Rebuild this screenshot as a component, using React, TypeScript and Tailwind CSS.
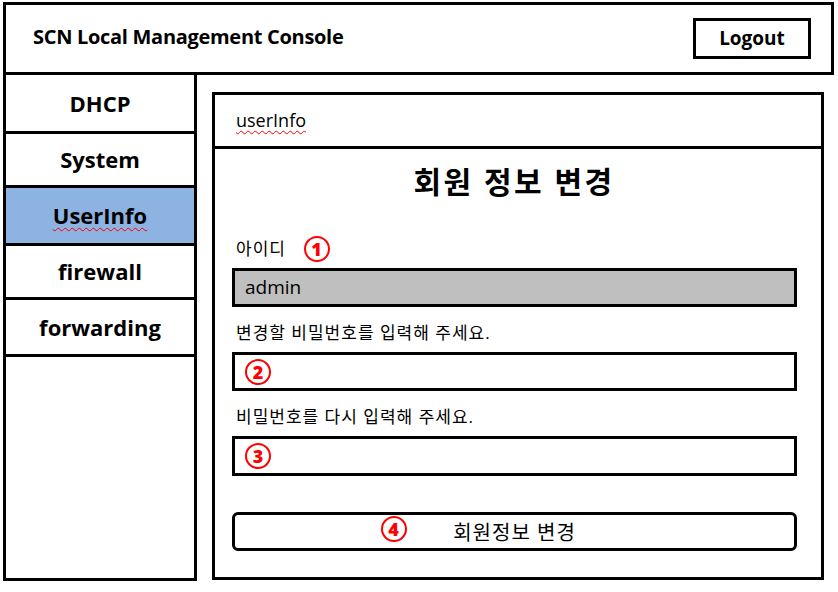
import React from "react";

const menu = [
  { label: "DHCP", h: "h-[59px]" },
  { label: "System", h: "h-[54px]" },
  { label: "UserInfo", h: "h-[58px]", active: true },
  { label: "firewall", h: "h-[54px]" },
  { label: "forwarding", h: "h-[57px]" },
];

function Mark({ n }: { n: string }) {
  return (
    <span className="inline-flex w-[26px] h-[26px] items-center justify-center rounded-full border-[2.5px] border-[#ff0000] text-[#ff0000] text-[18px] font-extrabold leading-none">
      {n}
    </span>
  );
}

function App() {
  return (
    <div
      className="w-[838px] h-[592px] bg-white text-black pl-[3px] pt-[2px]"
      style={{ fontFamily: '"Open Sans", "Noto Sans CJK KR", sans-serif' }}
    >
      <header className="w-[831px] h-[73px] border-[3px] border-black flex items-center justify-between pl-[27px] pr-[20px]">
        <h1 className="text-[20px] font-bold tracking-[-0.3px] mb-[3px]">SCN Local Management Console</h1>
        <button className="w-[118px] h-[41px] border-[3px] border-black text-[19px] font-bold flex items-center justify-center">
          Logout
        </button>
      </header>

      <div className="flex">
        <nav className="w-[194px] h-[506px] border-x-[3px] border-b-[3px] border-black flex flex-col">
          {menu.map((m) => (
            <div
              key={m.label}
              className={`${m.h} border-b-[3px] border-black flex items-center justify-center text-[22px] font-bold ${
                m.active ? "bg-[#8db3e2]" : ""
              }`}
            >
              <span className={m.active ? "underline decoration-wavy decoration-[#ff0000] decoration-1 underline-offset-[3px]" : ""}>
                {m.label}
              </span>
            </div>
          ))}
        </nav>

        <section className="ml-[15px] mt-[17px] w-[612px] h-[488px] border-[3px] border-black flex flex-col">
          <div className="h-[54px] border-b-[3px] border-black flex items-center pl-[21px] text-[18px]">
            <span className="underline decoration-wavy decoration-[#ff0000] decoration-1 underline-offset-[3px]">userInfo</span>
          </div>

          <div className="flex flex-col">
            <h2 className="mt-[15px] h-[36px] leading-[36px] text-center text-[30px] font-bold tracking-[2.5px] pr-[8px]">
              회원 정보 변경
            </h2>

            <div className="mt-[36px] ml-[21px] h-[26px] flex items-center gap-[18px] text-[17px] tracking-[1px]">
              <span>아이디</span>
              <Mark n="1" />
            </div>
            <div className="mt-[6px] ml-[17px] w-[565px] h-[39px] border-[3px] border-black bg-[#bfbfbf] flex items-center pl-[10px] text-[19px]">
              admin
            </div>

            <div className="mt-[14px] ml-[21px] h-[24px] flex items-center text-[17px] tracking-[1px]">
              변경할 비밀번호를 입력해 주세요.
            </div>
            <div className="mt-[7px] ml-[17px] w-[565px] h-[39px] border-[3px] border-black flex items-center pl-[10px]">
              <Mark n="2" />
            </div>

            <div className="mt-[14px] ml-[21px] h-[24px] flex items-center text-[17px] tracking-[1px]">
              비밀번호를 다시 입력해 주세요.
            </div>
            <div className="mt-[7px] ml-[17px] w-[565px] h-[40px] border-[3px] border-black flex items-center pl-[10px]">
              <Mark n="3" />
            </div>

            <button className="relative mt-[36px] ml-[17px] w-[565px] h-[39px] border-[3px] border-black rounded-[6px] flex items-center justify-center text-[20px] tracking-[1px] pt-[2px]">
              <span className="absolute left-[146px] top-[-1px]">
                <Mark n="4" />
              </span>
              회원정보 변경
            </button>
          </div>
        </section>
      </div>
    </div>
  );
}

export default App;
